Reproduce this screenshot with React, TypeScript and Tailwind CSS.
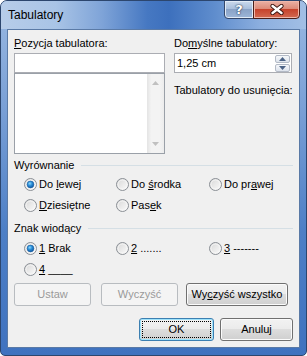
import React, { useId } from "react";

function Radio({ checked }: { checked?: boolean }) {
  const id = useId().replace(/:/g, "");
  return (
    <svg width="13" height="13" viewBox="0 0 13 13" className="shrink-0">
      <defs>
        <linearGradient id={`o${id}`} x1="0" y1="0" x2="1" y2="1">
          <stop offset="0" stopColor="#d6d6d6" />
          <stop offset="1" stopColor="#fdfdfd" />
        </linearGradient>
        <radialGradient id={`d${id}`} cx="0.4" cy="0.35" r="0.7">
          <stop offset="0" stopColor="#8fd8fb" />
          <stop offset="0.45" stopColor="#2b8fd9" />
          <stop offset="1" stopColor="#0d4f98" />
        </radialGradient>
      </defs>
      <circle cx="6.5" cy="6.5" r="6" fill={`url(#o${id})`} stroke="#8a8f95" strokeWidth="1" />
      <circle cx="6.5" cy="6.5" r="4.5" fill="none" stroke="#f6f6f6" strokeWidth="0.8" />
      {checked && (
        <circle cx="6.5" cy="6.5" r="3.4" fill={`url(#d${id})`} stroke="#1a5fa3" strokeWidth="0.6" />
      )}
    </svg>
  );
}

function RadioItem({ checked, children }: { checked?: boolean; children: React.ReactNode }) {
  return (
    <div className="flex items-center gap-[2px] h-[15px] leading-[15px] whitespace-pre">
      <Radio checked={checked} />
      <span>{children}</span>
    </div>
  );
}

function U({ children }: { children: React.ReactNode }) {
  return <span className="underline underline-offset-[1px] decoration-1">{children}</span>;
}

function GroupHeader({ children }: { children: React.ReactNode }) {
  return (
    <div className="flex items-center gap-[7px] h-[15px] leading-[15px]">
      <span>{children}</span>
      <div className="flex-1 h-px bg-[#d5dfe5]" />
    </div>
  );
}

function Btn({
  children,
  disabled,
  def,
  className = "",
}: {
  children: React.ReactNode;
  disabled?: boolean;
  def?: boolean;
  className?: string;
}) {
  const base = "h-[23px] rounded-[3px] border flex items-center justify-center leading-[15px] whitespace-nowrap ";
  const style = disabled
    ? "border-[#b8bcc0] bg-[#f4f4f4] text-[#9a9a9a]"
    : def
    ? "border-[#3c7fb1] bg-[linear-gradient(#f2f2f2_0%,#ebebeb_50%,#dddddd_50%,#cfcfcf_100%)] shadow-[inset_0_0_0_1px_#9fe3fb]"
    : "border-[#707070] bg-[linear-gradient(#f2f2f2_0%,#ebebeb_50%,#dddddd_50%,#cfcfcf_100%)] shadow-[inset_0_0_0_1px_#fbfbfb]";
  return (
    <div className={base + style + " " + className}>
      {def ? (
        <div className="m-[2px] flex-1 self-stretch flex items-center justify-center border border-dotted border-black">
          {children}
        </div>
      ) : (
        children
      )}
    </div>
  );
}

function Tri({ up, color }: { up?: boolean; color: string }) {
  return (
    <svg width="7" height="4" viewBox="0 0 7 4">
      <path d={up ? "M0 4 L3.5 0 L7 4 Z" : "M0 0 L3.5 4 L7 0 Z"} fill={color} />
    </svg>
  );
}

export default function App() {
  return (
    <div className="w-[307px] h-[356px] font-['Liberation_Sans',Arial,sans-serif] text-[11px] text-black">
      <div className="w-full h-full flex flex-col rounded-t-[7px] rounded-b-[5px] border border-[#2c466e] bg-[linear-gradient(180deg,#9ab9e2_0%,#7aa0d6_30%,#4d7fc6_65%,#3f72bf_100%)] overflow-hidden">
        {/* title bar */}
        <div className="h-[28px] flex items-start shrink-0 bg-[linear-gradient(90deg,#b7cde9_0%,#a9c4e6_18%,#7fa4d8_33%,#4678c2_48%,#3d70bd_55%,#5f8dcd_70%,#8cafdf_85%,#a2bfe5_100%)]">
          <span className="ml-[7px] mt-[7px] text-[12px] leading-[15px]">Tabulatory</span>
          <div className="ml-auto mr-[6px] flex">
            <div className="w-[30px] h-[19px] -mt-px rounded-bl-[4px] border border-[#34476a] bg-[linear-gradient(#cbdaec_0%,#a9bfdc_45%,#8aa3c7_50%,#9db6d8_100%)] shadow-[inset_0_0_0_1px_#e2ebf6] flex items-center justify-center">
              <span className="text-white font-bold text-[13px] leading-none font-['DejaVu_Sans',sans-serif] [text-shadow:0_0_2px_#1d3352,0_0_1px_#1d3352]">
                ?
              </span>
            </div>
            <div className="w-[47px] h-[19px] -mt-px -ml-px rounded-br-[4px] border border-[#4a1f1a] bg-[linear-gradient(#eab1a5_0%,#dd8b79_45%,#c7432c_50%,#d26a52_100%)] shadow-[inset_0_0_0_1px_#f0b7aa] flex items-center justify-center">
              <svg width="14" height="11" viewBox="0 0 14 11">
                <path d="M2.5 2 L11.5 9 M11.5 2 L2.5 9" stroke="#3b1510" strokeWidth="4.2" strokeLinecap="round" />
                <path d="M2.5 2 L11.5 9 M11.5 2 L2.5 9" stroke="#ffffff" strokeWidth="2.4" strokeLinecap="round" />
              </svg>
            </div>
          </div>
        </div>

        {/* client */}
        <div className="mx-[6px] mb-[7px] flex-1 border border-[#5a7aa6] bg-[#f0f0f0] px-[6px] pt-[6px] flex flex-col">
          <div className="flex gap-[9px]">
            <div className="w-[151px] flex flex-col">
              <div className="h-[15px] leading-[15px]">
                <U>P</U>ozycja tabulatora:
              </div>
              <div className="mt-[2px] h-[20px] bg-white border border-[#abadb3]" />
              <div className="h-[81px] bg-white border border-[#9aa0a8] flex justify-end">
                <div className="w-[17px] h-full bg-[linear-gradient(90deg,#e4e4e4_0%,#f3f3f3_25%,#f3f3f3_75%,#ececec_100%)] flex flex-col justify-between items-center py-[7px]">
                  <Tri up color="#c0c0c0" />
                  <Tri color="#c0c0c0" />
                </div>
              </div>
            </div>
            <div className="w-[118px] flex flex-col">
              <div className="h-[15px] leading-[15px] whitespace-nowrap">
                Do<U>m</U>yślne tabulatory:
              </div>
              <div className="mt-[2px] h-[20px] bg-white border border-[#abadb3] flex items-center">
                <span className="pl-[2px] leading-[15px]">1,25 cm</span>
                <div className="ml-auto mr-px flex flex-col gap-px">
                  <div className="w-[15px] h-[8px] border border-[#b3bac6] rounded-[2px] bg-[linear-gradient(#f6f8fb,#dde3ec)] flex items-center justify-center">
                    <Tri up color="#4c6386" />
                  </div>
                  <div className="w-[15px] h-[8px] border border-[#b3bac6] rounded-[2px] bg-[linear-gradient(#f6f8fb,#dde3ec)] flex items-center justify-center">
                    <Tri color="#4c6386" />
                  </div>
                </div>
              </div>
              <div className="mt-[10px] h-[15px] leading-[15px] whitespace-nowrap">Tabulatory do usunięcia:</div>
            </div>
          </div>

          <div className="mt-[4px]">
            <GroupHeader>Wyrównanie</GroupHeader>
          </div>
          <div className="mt-[4px] pl-[10px] grid grid-cols-[92px_93px_1fr] gap-y-[6px]">
            <RadioItem checked>
              Do <U>l</U>ewej
            </RadioItem>
            <RadioItem>
              Do <U>ś</U>rodka
            </RadioItem>
            <RadioItem>
              Do pr<U>a</U>wej
            </RadioItem>
            <RadioItem>
              <U>D</U>ziesiętne
            </RadioItem>
            <RadioItem>
              Pas<U>e</U>k
            </RadioItem>
          </div>

          <div className="mt-[8px]">
            <GroupHeader>Znak wiodący</GroupHeader>
          </div>
          <div className="mt-[5px] pl-[10px] grid grid-cols-[92px_93px_1fr] gap-y-[6px]">
            <RadioItem checked>
              <U>1</U> Brak
            </RadioItem>
            <RadioItem>
              <U>2</U> .......
            </RadioItem>
            <RadioItem>
              <U>3</U> -------
            </RadioItem>
            <RadioItem>
              <U>4</U> ____
            </RadioItem>
          </div>

          <div className="mt-[6px] flex">
            <Btn disabled className="w-[77px]">
              Ustaw
            </Btn>
            <Btn disabled className="w-[77px] ml-[10px]">
              Wyczyść
            </Btn>
            <Btn className="w-[102px] ml-[8px]">
              Wy<U>c</U>zyść wszystko
            </Btn>
          </div>

          <div className="mt-[12px] flex justify-end">
            <Btn def className="w-[75px]">
              OK
            </Btn>
            <Btn className="w-[73px] ml-[6px]">Anuluj</Btn>
          </div>
        </div>
      </div>
    </div>
  );
}
